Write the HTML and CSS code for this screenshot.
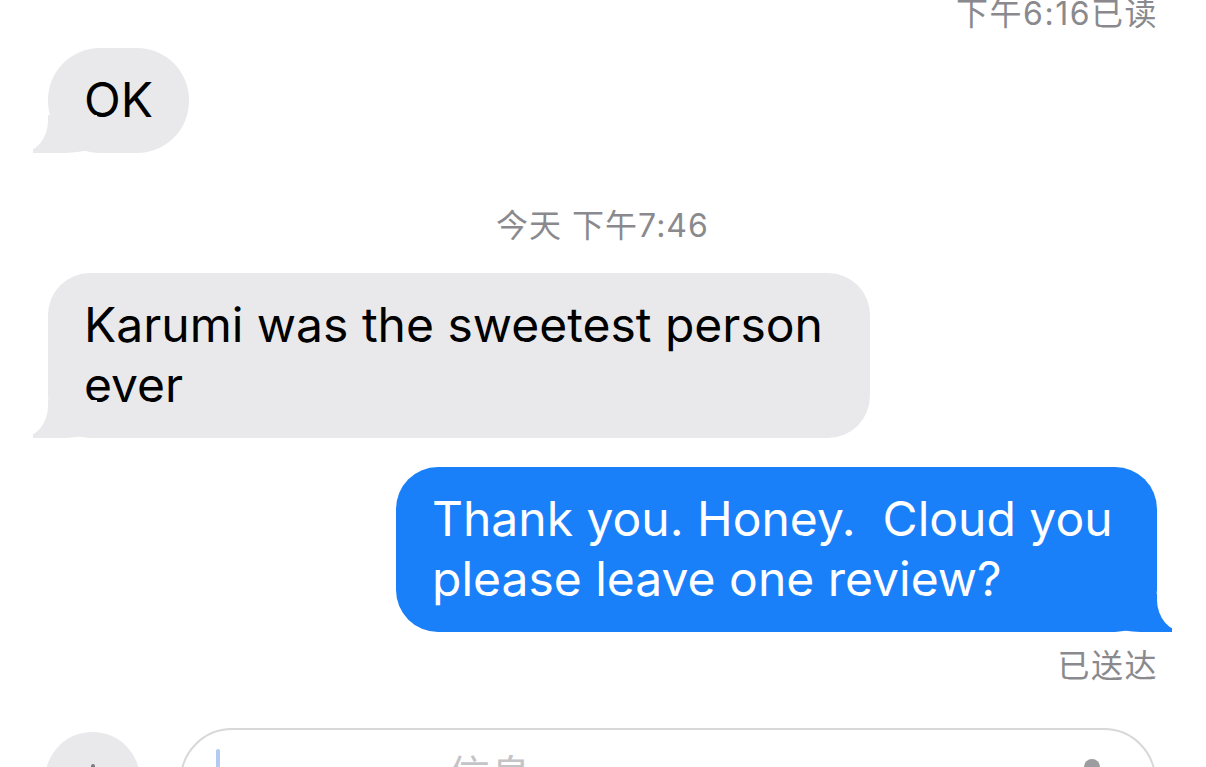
FILE: index.html
```html
<!DOCTYPE html>
<html lang="zh-CN">
<head>
    <meta charset="UTF-8">
    <title>信息</title>
    <link rel="stylesheet" href="styles.css">
</head>
<body>
    <div class="thread">
        <div class="status">下午6:16已读</div>

        <div class="row">
            <div class="bubble in">OK</div>
        </div>

        <div class="stamp">今天 下午7:46</div>

        <div class="row">
            <div class="bubble in long">Karumi was the sweetest person<br>ever</div>
        </div>

        <div class="row mine">
            <div class="bubble out">Thank you. Honey.&nbsp; Cloud you<br>please leave one review?</div>
        </div>

        <div class="status delivered">已送达</div>
    </div>

    <!-- 输入栏 -->
    <div class="composer">
        <div class="plus">
            <svg width="40" height="40" viewBox="0 0 40 40">
                <path d="M20 6v28M6 20h28" stroke="#7b7b80" stroke-width="4" stroke-linecap="round"/>
            </svg>
        </div>
        <div class="field">
            <span class="cursor"></span>
            <span class="placeholder">信息</span>
            <svg class="mic" width="24" height="40" viewBox="0 0 24 40">
                <rect x="4" y="2" width="16" height="26" rx="8" fill="#9c9ca1"/>
            </svg>
        </div>
    </div>
</body>
</html>
```

FILE: styles.css
```css
html, body {
    margin: 0;
    padding: 0;
    overflow: hidden;
    background: #fff;
}
body {
    font-family: Inter, "Noto Sans CJK SC", sans-serif;
    width: 1206px;
    height: 767px;
}
.thread {
    display: flex;
    flex-direction: column;
    padding: 0 49px 0 48px;
}
.status {
    align-self: flex-end;
    margin-top: -4px;
    font-size: 32px;
    line-height: 36px;
    letter-spacing: 1.5px;
    margin-right: -1px;
    color: #8a8a8e;
}
.status.delivered {
    margin-top: 16px;
}
.stamp {
    align-self: center;
    margin-top: 55px;
    font-size: 32px;
    line-height: 36px;
    letter-spacing: 1px;
    color: #8a8a8e;
}
.row {
    display: flex;
    margin-top: 16px;
}
.row + .row {
    margin-top: 29px;
}
.stamp + .row {
    margin-top: 29px;
}
.row.mine {
    justify-content: flex-end;
}
.bubble {
    position: relative;
    padding: 22px 36px 23px 36px;
    font-size: 48px;
    line-height: 60px;
    border-radius: 52px;
}
.bubble.in {
    background: #e9e9eb;
    color: #000;
}
.bubble.long {
    width: 750px;
    border-radius: 42px;
}
.bubble.out {
    width: 689px;
    background: #1a80fa;
    color: #fff;
    border-radius: 42px;
}
/* 气泡尾巴 */
.bubble::before,
.bubble::after {
    content: "";
    position: absolute;
    bottom: 0;
    height: 38px;
}
.bubble.in::before {
    left: -15px;
    width: 64px;
    background: #e9e9eb;
    border-bottom-right-radius: 40px 8px;
}
.bubble.out::before {
    right: -15px;
    width: 64px;
    background: #1a80fa;
    border-bottom-left-radius: 40px 8px;
}
.bubble.in::after {
    left: -52px;
    width: 52px;
    background: #fff;
    border-bottom-right-radius: 28px 32px;
}
.bubble.out::after {
    right: -52px;
    width: 52px;
    background: #fff;
    border-bottom-left-radius: 28px 32px;
}
.composer {
    display: flex;
    align-items: flex-start;
    margin-top: 44px;
    padding-left: 45px;
}
.plus {
    width: 95px;
    height: 95px;
    margin-top: 4px;
    border-radius: 50%;
    background: #e9e9eb;
    display: flex;
    align-items: center;
    justify-content: center;
}
.field {
    position: relative;
    width: 972px;
    height: 100px;
    margin-left: 40px;
    border: 2px solid #d8d8da;
    border-radius: 56px;
    display: flex;
    align-items: flex-start;
}
.cursor {
    width: 4px;
    height: 50px;
    margin: 19px 0 0 34px;
    background: #b3cbf3;
    border-radius: 2px;
}
.placeholder {
    margin: 18px 0 0 228px;
    font-size: 42px;
    line-height: 56px;
    color: #c4c4c7;
}
.mic {
    position: absolute;
    left: 898px;
    top: 27px;
}
```
